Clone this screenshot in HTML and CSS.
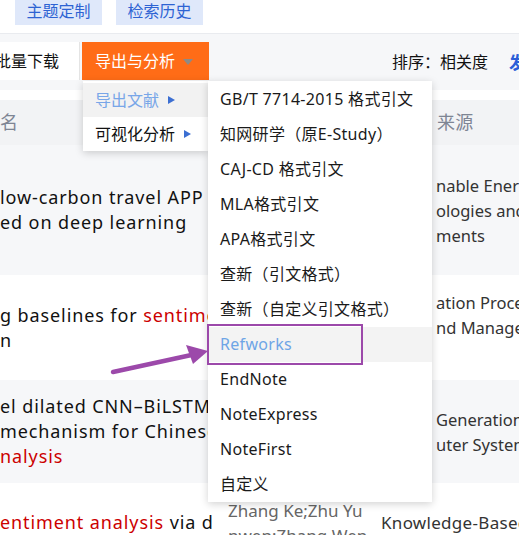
FILE: index.html
```html
<!DOCTYPE html>
<html lang="zh">
<head>
<meta charset="utf-8">
<link rel="stylesheet" href="styles.css">
</head>
<body>
<div class="page">
  <div class="topbar">
    <span class="tag">主题定制</span>
    <span class="tag">检索历史</span>
  </div>
  <div class="toolbar">
    <div class="tb-left">
      <span class="btn-white"><span>批量下载</span></span>
      <span class="btn-orange">导出与分析<i class="caret"></i></span>
    </div>
    <div class="tb-right">
      <span class="sort">排序：相关度</span>
      <span class="cut-blue">发</span>
    </div>
  </div>
  <div class="gap"></div>
  <div class="table">
    <div class="row thead">
      <div class="c-title">名</div>
      <div class="c-author"></div>
      <div class="c-src hd">来源</div>
    </div>
    <div class="row shade r1">
      <div class="c-title">low-carbon travel APP<br>ed on deep learning</div>
      <div class="c-author">Li Wei;Wang Fang;<br>Chen Jie;Liu Yang;<br>Zhao Min;Sun Hao;<br>Zhou Lin</div>
      <div class="c-src tail">nable Energy<br>ologies and<br>ments</div>
    </div>
    <div class="row r2">
      <div class="c-title">g baselines for <span class="red">sentiment</span><br>n</div>
      <div class="c-author">Zhang Lei;Wu Qi;<br>Huang Tao;Xu Jing;<br>Ma Lin</div>
      <div class="c-src tail">ation Processing<br>nd Management<br>&nbsp;</div>
    </div>
    <div class="row shade r3">
      <div class="c-title">el dilated CNN–BiLSTM<br>mechanism for Chinese<br><span class="red">nalysis</span></div>
      <div class="c-author">Gao Yu;Lin Hui;<br>Qian Bo;Guo Yan;<br>Han Xue</div>
      <div class="c-src tail">Generation<br>uter Systems</div>
    </div>
    <div class="row r4">
      <div class="c-title single"><span class="red">entiment analysis</span> via deep</div>
      <div class="c-author">Zhang Ke;Zhu Yu<br>nwen;Zhang Wen</div>
      <div class="c-src single">Knowledge-Based</div>
    </div>
  </div>

  <div class="menu menu1">
    <div class="m1-item active">导出文献<i class="tri"></i></div>
    <div class="m1-item">可视化分析<i class="tri"></i></div>
  </div>

  <div class="menu menu2">
    <div class="m2-item">GB/T 7714-2015 格式引文</div>
    <div class="m2-item">知网研学（原E-Study）</div>
    <div class="m2-item">CAJ-CD 格式引文</div>
    <div class="m2-item">MLA格式引文</div>
    <div class="m2-item">APA格式引文</div>
    <div class="m2-item">查新（引文格式）</div>
    <div class="m2-item">查新（自定义引文格式）</div>
    <div class="m2-item hover">Refworks</div>
    <div class="m2-item">EndNote</div>
    <div class="m2-item">NoteExpress</div>
    <div class="m2-item">NoteFirst</div>
    <div class="m2-item">自定义</div>
  </div>

  <div class="mark-box"></div>
  <svg class="arrow" width="519" height="535" viewBox="0 0 519 535">
    <line x1="113" y1="372" x2="196" y2="354" stroke="#9c49aa" stroke-width="4.5" stroke-linecap="round"/>
    <polygon points="208,351 186,345 193,364" fill="#9c49aa"/>
  </svg>
</div>
</body>
</html>
```

FILE: styles.css
```css
* { box-sizing: border-box; }
html, body { margin: 0; padding: 0; background: #fff; }
body {
  font-family: "Noto Sans", "Noto Sans CJK SC", sans-serif;
  color: #222;
  width: 519px;
  height: 535px;
  overflow: hidden;
}
.page { position: relative; width: 519px; height: 535px; overflow: hidden; }

.topbar {
  height: 33px;
  display: flex;
  align-items: flex-start;
  gap: 14px;
  padding-left: 15px;
}
.tag {
  width: 87px;
  height: 25px;
  background: #dfe8fa;
  color: #2d63d3;
  font-size: 16px;
  line-height: 23px;
  text-align: center;
}

.toolbar {
  height: 57px;
  border-top: 1px solid #e9ebef;
  background: #f6f7f9;
  display: flex;
  justify-content: space-between;
  align-items: flex-start;
  padding-top: 8px;
}
.tb-left { display: flex; gap: 2px; }
.btn-white {
  width: 80px;
  height: 38px;
  background: #fff;
  border-right: 1px solid #e4e4e4;
  font-size: 16px;
  line-height: 38px;
  display: flex;
  justify-content: flex-end;
  overflow: hidden;
  white-space: nowrap;
  padding-right: 20px;
  color: #111;
}
.btn-white span { flex: none; }
.btn-orange {
  width: 127px;
  height: 38px;
  background: #ff6c17;
  color: #fff;
  font-size: 16px;
  line-height: 38px;
  padding-left: 13px;
  display: flex;
  align-items: center;
}
.caret {
  display: inline-block;
  width: 0; height: 0;
  border-left: 5px solid transparent;
  border-right: 5px solid transparent;
  border-top: 6px solid #8e8a86;
  margin-left: 8px;
  margin-top: 2px;
}
.tb-right {
  display: flex;
  align-items: center;
  height: 38px;
  gap: 21px;
  margin-right: -7px;
}
.sort { font-size: 16px; color: #111; }
.cut-blue { font-size: 17px; font-weight: bold; color: #2b5fd8; }

.gap { height: 10px; background: #fff; }

.row {
  display: flex;
  align-items: center;
  font-size: 18px;
  letter-spacing: 0.9px;
  line-height: 25px;
}
.row.shade { background: #f6f7f9; }
.row.thead { background: #f2f3f5; height: 45px; letter-spacing: 0; }
.c-title {
  width: 212px;
  margin-right: 16px;
  white-space: nowrap;
  overflow: hidden;
  color: #111;
}
.c-author {
  width: 153px;
  white-space: nowrap;
  overflow: hidden;
  color: #666;
  font-size: 17px;
  letter-spacing: 0;
  padding: 15px 0;
}
.c-src {
  flex: 1;
  white-space: nowrap;
  overflow: hidden;
  color: #333;
  font-size: 17px;
  letter-spacing: 0.3px;
}
.c-src.tail { padding-left: 55px; letter-spacing: 0; font-size: 16.5px; }
.thead .c-title, .hd { color: #7e8594; font-size: 18px; }
.hd { padding-left: 56px; }
.red { color: #cc0000; }
.r1 { height: 130px; }
.r2 { height: 105px; }
.r3 { height: 103px; }
.r4 { align-items: flex-start; }
.single { padding-top: 27px; }

.menu {
  position: absolute;
  background: #fff;
  box-shadow: 0 2px 8px rgba(0, 0, 0, 0.18);
}
.menu1 {
  left: 83px;
  top: 81px;
  width: 125px;
  padding-top: 2px;
}
.m1-item {
  height: 34px;
  line-height: 34px;
  padding-left: 12px;
  font-size: 16px;
  color: #111;
  display: flex;
  align-items: center;
}
.m1-item.active { background: #f2f2f2; color: #78a6e8; }
.tri {
  display: inline-block;
  width: 0; height: 0;
  border-top: 4px solid transparent;
  border-bottom: 4px solid transparent;
  border-left: 7px solid #3c6fd2;
  margin-left: 9px;
}

.menu2 {
  left: 208px;
  top: 81px;
  width: 224px;
  padding: 1px 0 0;
}
.m2-item {
  height: 35px;
  line-height: 35px;
  padding-left: 12px;
  font-size: 16px;
  letter-spacing: 0.3px;
  color: #1a1a1a;
  white-space: nowrap;
}
.m2-item.hover { background: #f3f3f3; color: #6ea5e6; }

.mark-box {
  position: absolute;
  left: 207px;
  top: 324px;
  width: 156px;
  height: 41px;
  border: 2.5px solid #9c49aa;
}
.arrow { position: absolute; left: 0; top: 0; pointer-events: none; }
```
